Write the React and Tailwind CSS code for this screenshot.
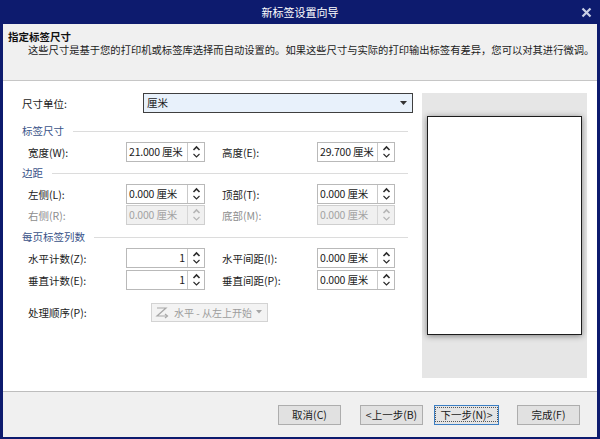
import React from "react";

const label = "text-[10.5px] leading-[13px] text-[#1b1b1b] whitespace-nowrap";

function Arrows({ disabled }) {
  const c = disabled ? "#b5b5b5" : "#2b2b2b";
  return (
    <svg width="9" height="14" viewBox="0 0 9 14">
      <path d="M1.5 5 L4.5 2 L7.5 5" fill="none" stroke={c} strokeWidth="1.6" />
      <path d="M1.5 9 L4.5 12 L7.5 9" fill="none" stroke={c} strokeWidth="1.1" />
    </svg>
  );
}

function Spin({ value, right, disabled, w = "w-[79px]" }) {
  return (
    <div className={`flex h-[20px] ${w} border ${disabled ? "border-[#cfcfcf] bg-[#f0f0f0]" : "border-[#b9b9b9] bg-white"}`}>
      <div className={`flex flex-1 items-center overflow-hidden whitespace-nowrap px-[2px] text-[10.5px] tracking-[-0.2px] ${right ? "justify-end" : ""} ${disabled ? "text-[#a3a3a3]" : "text-[#1b1b1b]"}`}>
        {value}
      </div>
      <div className={`flex w-[17px] shrink-0 items-center justify-center border-l ${disabled ? "border-[#d6d6d6]" : "border-[#c9c9c9]"}`}>
        <Arrows disabled={disabled} />
      </div>
    </div>
  );
}

function Group({ text, mt }) {
  return (
    <div className={`flex h-[18px] items-center pl-[19px] pr-[5px] ${mt}`}>
      <span className="text-[10.5px] text-[#3a5389]">{text}</span>
      <div className="ml-[9px] h-px flex-1 bg-[#dcdcdc]" />
    </div>
  );
}

function Row({ a, av, b, bv, right, disabled, mt }) {
  return (
    <div className={`flex h-[20px] items-center pl-[25px] ${mt}`}>
      <span className={`w-[98px] ${label} ${disabled ? "!text-[#8e8e8e]" : ""}`}>{a}</span>
      <Spin value={av} right={right} disabled={disabled} />
      <span className={`ml-[17px] w-[95px] ${label} ${disabled ? "!text-[#8e8e8e]" : ""}`}>{b}</span>
      <Spin value={bv} disabled={disabled} w="w-[78px]" />
    </div>
  );
}

function Btn({ children, focus, w = "w-[63px]" }) {
  return (
    <button
      className={`flex h-[20px] ${w} items-center justify-center border text-[10.5px] text-[#1b1b1b] ${
        focus ? "border-[#3c7fc4] bg-[#e5e5e5]" : "border-[#adadad] bg-[#e1e1e1]"
      }`}
    >
      <span className={focus ? "border border-dotted border-[#555] px-[4px] leading-[13px]" : ""}>{children}</span>
    </button>
  );
}

export default function App() {
  return (
    <div className="flex h-[439px] w-[600px] flex-col bg-[#0d1b6e] px-[3px] pb-[2px] font-['Noto_Sans_CJK_SC','Liberation_Sans',sans-serif]">
      <div className="relative -mx-[3px] flex h-[24px] items-center justify-center">
        <span className="text-[11px] text-white">新标签设置向导</span>
        <svg className="absolute right-[8px] top-[7px]" width="11" height="11" viewBox="0 0 11 11">
          <path d="M1.5 1.5 L9.5 9.5 M9.5 1.5 L1.5 9.5" stroke="#c9cfe6" strokeWidth="2.2" />
        </svg>
      </div>

      <div className="h-[57px] border-b border-[#c6c6c6] bg-[#f0f0f0] pl-[5px] pt-[6px]">
        <div className="text-[10.5px] font-bold leading-[13px] text-[#111]">指定标签尺寸</div>
        <div className="pl-[20px] text-[10.3px] leading-[14px] text-[#1b1b1b]">
          这些尺寸是基于您的打印机或标签库选择而自动设置的。如果这些尺寸与实际的打印输出标签有差异，您可以对其进行微调。
        </div>
      </div>

      <div className="flex flex-1 bg-white">
        <div className="flex w-[410px] flex-col pt-[12px]">
          <div className="flex h-[20px] items-center pl-[19px]">
            <span className={`w-[121px] ${label}`}>尺寸单位:</span>
            <div className="flex h-[20px] w-[270px] items-center justify-between border border-[#3f3f3f] bg-[#e8f1fb] pl-[3px] pr-[5px]">
              <span className="text-[10.5px] text-[#1b1b1b]">厘米</span>
              <svg width="7" height="4" viewBox="0 0 7 4"><path d="M0 0 H7 L3.5 4 Z" fill="#333" /></svg>
            </div>
          </div>

          <Group text="标签尺寸" mt="mt-[9px]" />
          <Row mt="mt-[2px]" a="宽度(W):" av="21.000 厘米" b="高度(E):" bv="29.700 厘米" />

          <Group text="边距" mt="mt-[2px]" />
          <Row mt="mt-[2px]" a="左侧(L):" av="0.000 厘米" b="顶部(T):" bv="0.000 厘米" />
          <Row mt="mt-[1px]" a="右侧(R):" av="0.000 厘米" b="底部(M):" bv="0.000 厘米" disabled />

          <Group text="每页标签列数" mt="mt-[3px]" />
          <Row mt="mt-[2px]" a="水平计数(Z):" av="1" right b="水平间距(I):" bv="0.000 厘米" />
          <Row mt="mt-[2px]" a="垂直计数(E):" av="1" right b="垂直间距(P):" bv="0.000 厘米" />

          <div className="mt-[12px] flex h-[20px] items-center pl-[25px]">
            <span className={`w-[123px] ${label}`}>处理顺序(P):</span>
            <div className="flex h-[19px] w-[117px] items-center gap-[4px] border border-[#d3d3d3] bg-[#f3f3f3] pl-[3px]">
              <svg width="15" height="13" viewBox="0 0 15 13">
                <path d="M2 2 H11 L2 10 H12" fill="none" stroke="#a8a8a8" strokeWidth="1.2" />
                <path d="M10 8 L12.5 10 L10 12" fill="none" stroke="#a8a8a8" strokeWidth="1.2" />
              </svg>
              <span className="whitespace-nowrap text-[10px] text-[#9c9c9c]">水平 - 从左上开始</span>
              <svg width="6" height="4" viewBox="0 0 6 4"><path d="M0 0 H6 L3 3.5 Z" fill="#a5a5a5" /></svg>
            </div>
          </div>
        </div>

        <div className="ml-[9px] mt-[12px] flex h-[285px] w-[165px] justify-center bg-[#e6e6e6] pt-[23px]">
          <div className="h-[219px] w-[155px] border-[1.5px] border-[#1c1c1c] bg-white shadow-[0_1px_6px_rgba(0,0,0,0.45)]" />
        </div>
      </div>

      <div className="flex h-[46px] items-center border-t border-[#bdbdbd] bg-[#f0f0f0] pl-[275px]">
        <Btn>取消(C)</Btn>
        <div className="ml-[19px]">
          <Btn>&lt;上一步(B)</Btn>
        </div>
        <div className="ml-[11px]">
          <Btn focus w="w-[65px]">下一步(N)&gt;</Btn>
        </div>
        <div className="ml-[18px]">
          <Btn>完成(F)</Btn>
        </div>
      </div>
    </div>
  );
}
